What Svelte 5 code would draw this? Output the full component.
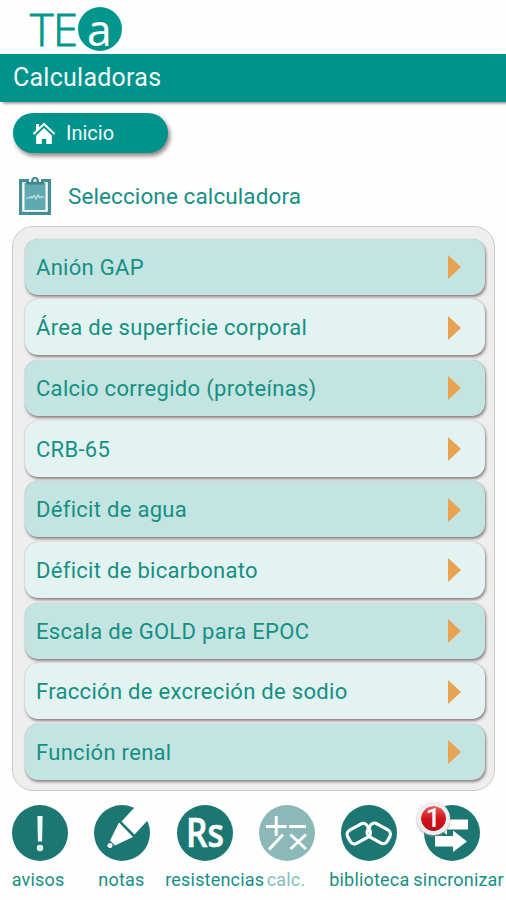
<script lang="ts">
	type TabKey = 'avisos' | 'notas' | 'resistencias' | 'calc' | 'biblioteca' | 'sincronizar';

	const calculators = [
		'Anión GAP',
		'Área de superficie corporal',
		'Calcio corregido (proteínas)',
		'CRB-65',
		'Déficit de agua',
		'Déficit de bicarbonato',
		'Escala de GOLD para EPOC',
		'Fracción de excreción de sodio',
		'Función renal'
	];

	const tabs: { key: TabKey; label: string; badge?: number }[] = [
		{ key: 'avisos', label: 'avisos' },
		{ key: 'notas', label: 'notas' },
		{ key: 'resistencias', label: 'resistencias' },
		{ key: 'calc', label: 'calc.' },
		{ key: 'biblioteca', label: 'biblioteca' },
		{ key: 'sincronizar', label: 'sincronizar', badge: 1 }
	];

	let current = $state<TabKey>('calc');
</script>

<div class="app">
	<header>
		<div class="logo">
			<span class="logo-te">TE</span>
			<span class="logo-a"><span>a</span></span>
		</div>
		<h1>Calculadoras</h1>
	</header>

	<button class="home">
		<svg width="24" height="24" viewBox="0 0 24 24" aria-hidden="true">
			<path d="M4 3h3v5L4 10z" fill="#fff" />
			<path d="M1.5 13 12 3l10.5 10" fill="none" stroke="#fff" stroke-width="2" />
			<path d="M4.2 14.500 12 7l7.800 7.500V23h-5.500v-5h-4.500v5H4.200z" fill="#fff" />
		</svg>
		<span>Inicio</span>
	</button>

	<div class="heading">
		<svg width="34" height="40" viewBox="0 0 34 40" aria-hidden="true">
			<rect x="2.600" y="4.600" width="28.800" height="32.800" fill="#fff" stroke="#438f96" stroke-width="3.200" />
			<path d="M11 2h12v5H11z" fill="#fff" />
			<rect x="6.500" y="7" width="21" height="27" fill="#5fa9b2" />
			<path d="M8 8.500V6h5q0-5 4-5t4 5h5v2.500z" fill="#3f858d" />
			<circle cx="17" cy="4.500" r="1.800" fill="#d7eced" />
			<path
				d="M8 22h3l1.500-1.500L14 22l2-2.500 2 3.500 2-4 2 3 2-1.500 2 1"
				fill="none"
				stroke="#c9e6e8"
				stroke-width="1.200"
			/>
		</svg>
		<h2>Seleccione calculadora</h2>
	</div>

	<ul class="panel">
		{#each calculators as name}
			<li>
				<button class="row">
					<span>{name}</span>
					<svg width="14" height="26" viewBox="0 0 14 26" aria-hidden="true">
						<path d="M0 1 13 13 0 25z" fill="#e9a24f" />
					</svg>
				</button>
			</li>
		{/each}
	</ul>

	<nav>
		{#each tabs as tab}
			<button
				class="tab {tab.key}"
				class:is-current={current === tab.key}
				onclick={() => (current = tab.key)}
			>
				<span class="tab-icon">
					<svg width="56" height="56" viewBox="0 0 56 56" aria-hidden="true">
						<circle cx="28" cy="28" r="28" fill="#1c7773" />
						{#if tab.key === 'avisos'}
							<path d="M25.400 11h5.200l-.5 25.500h-4.200z" fill="#eef8f7" />
							<circle cx="28" cy="43" r="3.200" fill="#eef8f7" />
						{:else if tab.key === 'notas'}
							<path d="M40.500 2.500 27.500 16.500l13 13L53.500 15.500 57 0z" fill="#fefefe" />
							<path d="m25 17.500 14 14.500-18 8.500-5-5z" fill="#fefefe" />
							<circle cx="16" cy="40.500" r="2.500" fill="#fefefe" />
						{:else if tab.key === 'resistencias'}
							<text x="9" y="41.500" textLength="38" lengthAdjust="spacingAndGlyphs" class="rs">Rs</text>
						{:else if tab.key === 'calc'}
							<path
								d="M7 21.500h20.500M17.200 11v20M30 21.500h17M10 44.500l14-15M31.500 29.500 47 44M47 29.500 31.500 44"
								fill="none"
								stroke="#fff"
								stroke-width="3"
							/>
						{:else if tab.key === 'biblioteca'}
							<g fill="none" stroke="#fff" stroke-width="3.200">
								<rect x="6.500" y="21" width="22.500" height="15" rx="5" transform="rotate(-29 18 28.500)" />
								<rect x="26.500" y="21" width="22.500" height="15" rx="5" transform="rotate(29 38 28.500)" />
							</g>
						{:else}
							<path d="M12 19.500 23 9v5.500h21v10H23V30z" fill="#fff" />
							<path d="M11 31h18v-5.500l14 11-14 10.500v-5.500H11z" fill="#fff" />
						{/if}
					</svg>
					{#if tab.badge}
						<span class="badge"><b>{tab.badge}</b></span>
					{/if}
				</span>
				<span class="tab-label">{tab.label}</span>
			</button>
		{/each}
	</nav>
</div>

<style>
	:global(body) {
		margin: 0;
		background: #fefefe;
	}

	.app {
		width: 506px;
		height: 900px;
		overflow: hidden;
		font-family: Roboto, sans-serif;
		color: #159083;
	}

	button {
		border: none;
		padding: 0;
		font: inherit;
		color: inherit;
		background: none;
		cursor: pointer;
	}

	svg {
		display: block;
	}

	.logo {
		display: flex;
		height: 54px;
		padding-left: 30px;
	}

	.logo-te {
		flex: none;
		margin-top: 3px;
		margin-right: 1px;
		font-family: 'Open Sans', sans-serif;
		font-size: 45px;
		font-weight: 300;
		line-height: 51px;
		letter-spacing: -0.5px;
		color: #00968c;
		-webkit-text-stroke: 0.9px #00968c;
	}

	.logo-a {
		width: 44px;
		height: 44px;
		margin-top: 7px;
		border-radius: 50%;
		background: #00968c;
		color: #fff;
		font-family: 'Noto Sans', sans-serif;
		font-size: 44px;
		line-height: 44px;
		text-align: center;
	}

	.logo-a span {
		margin-left: -2px;
	}

	h1 {
		box-sizing: border-box;
		height: 48px;
		margin: 0;
		padding-left: 13px;
		background: #00938b;
		box-shadow: 3px 2px 2px #aaa;
		color: #f0fbfa;
		font-size: 25px;
		font-weight: 400;
		line-height: 48px;
		letter-spacing: 0.25px;
	}

	.home {
		display: flex;
		align-items: center;
		gap: 10px;
		width: 155px;
		height: 40px;
		margin: 11px 0 0 13px;
		padding-left: 19px;
		border-radius: 20px;
		background: #00938b;
		box-shadow: 2px 3px 4px rgba(70, 50, 50, 0.6);
		color: #f0fbfa;
		font-size: 20px;
	}

	.heading {
		display: flex;
		align-items: center;
		gap: 16px;
		height: 40px;
		margin: 23px 0 0 18px;
	}

	h2 {
		margin: 0;
		font-size: 22.5px;
		font-weight: 400;
		letter-spacing: 0.1px;
	}

	.panel {
		box-sizing: border-box;
		display: grid;
		grid-auto-rows: 1fr;
		gap: 4.5px;
		width: 483px;
		height: 565px;
		margin: 10px 0 0 12px;
		padding: 11.5px 9.5px 10px 12px;
		border: 1px solid #cacaca;
		border-radius: 21px;
		background: #eee;
		list-style: none;
	}

	li {
		display: grid;
	}

	.row {
		display: flex;
		align-items: center;
		justify-content: space-between;
		padding: 1px 23px 0 11px;
		border-radius: 13px;
		background: #c4e4e1;
		box-shadow:
			1px 2px 3px rgba(80, 60, 60, 0.6),
			0 0 1px #aaa;
		font-size: 22px;
		letter-spacing: 0.3px;
	}

	li:nth-child(even) .row {
		background: #e2f3f1;
	}

	nav {
		display: grid;
		grid-template-columns: repeat(6, 82.3px);
		margin: 14px 0 0 -1px;
	}

	.tab {
		display: flex;
		flex-direction: column;
		align-items: center;
		gap: 9px;
	}

	.tab-icon {
		position: relative;
	}

	.tab-label {
		font-size: 18px;
		line-height: 20px;
		letter-spacing: 0.2px;
		white-space: nowrap;
	}

	.is-current svg {
		opacity: 0.5;
	}

	.is-current .tab-label {
		opacity: 0.55;
	}

	.avisos .tab-label {
		margin-right: 4px;
	}

	.notas .tab-label {
		margin-right: 2px;
	}

	.resistencias .tab-label {
		margin-right: -20px;
	}

	.calc .tab-label {
		margin-right: 2px;
	}

	.sincronizar .tab-label {
		margin-right: -14px;
	}

	.rs {
		fill: #fff;
		font-family: 'Open Sans', sans-serif;
		font-size: 39px;
		font-weight: 600;
		stroke: #fff;
		stroke-width: 0.6px;
	}

	.badge {
		position: absolute;
		top: -3px;
		left: -7px;
		display: grid;
		place-items: center;
		width: 25px;
		height: 25px;
		border: 4px solid #eee;
		border-radius: 50%;
		background: linear-gradient(#e8605f, #d2141b 50%, #bd0d13);
		background-clip: padding-box;
		box-shadow: 0 1px 2px #999;
		color: #fff;
		font-size: 26px;
		line-height: 25px;
	}

	.badge b {
		font-weight: 500;
	}
</style>
